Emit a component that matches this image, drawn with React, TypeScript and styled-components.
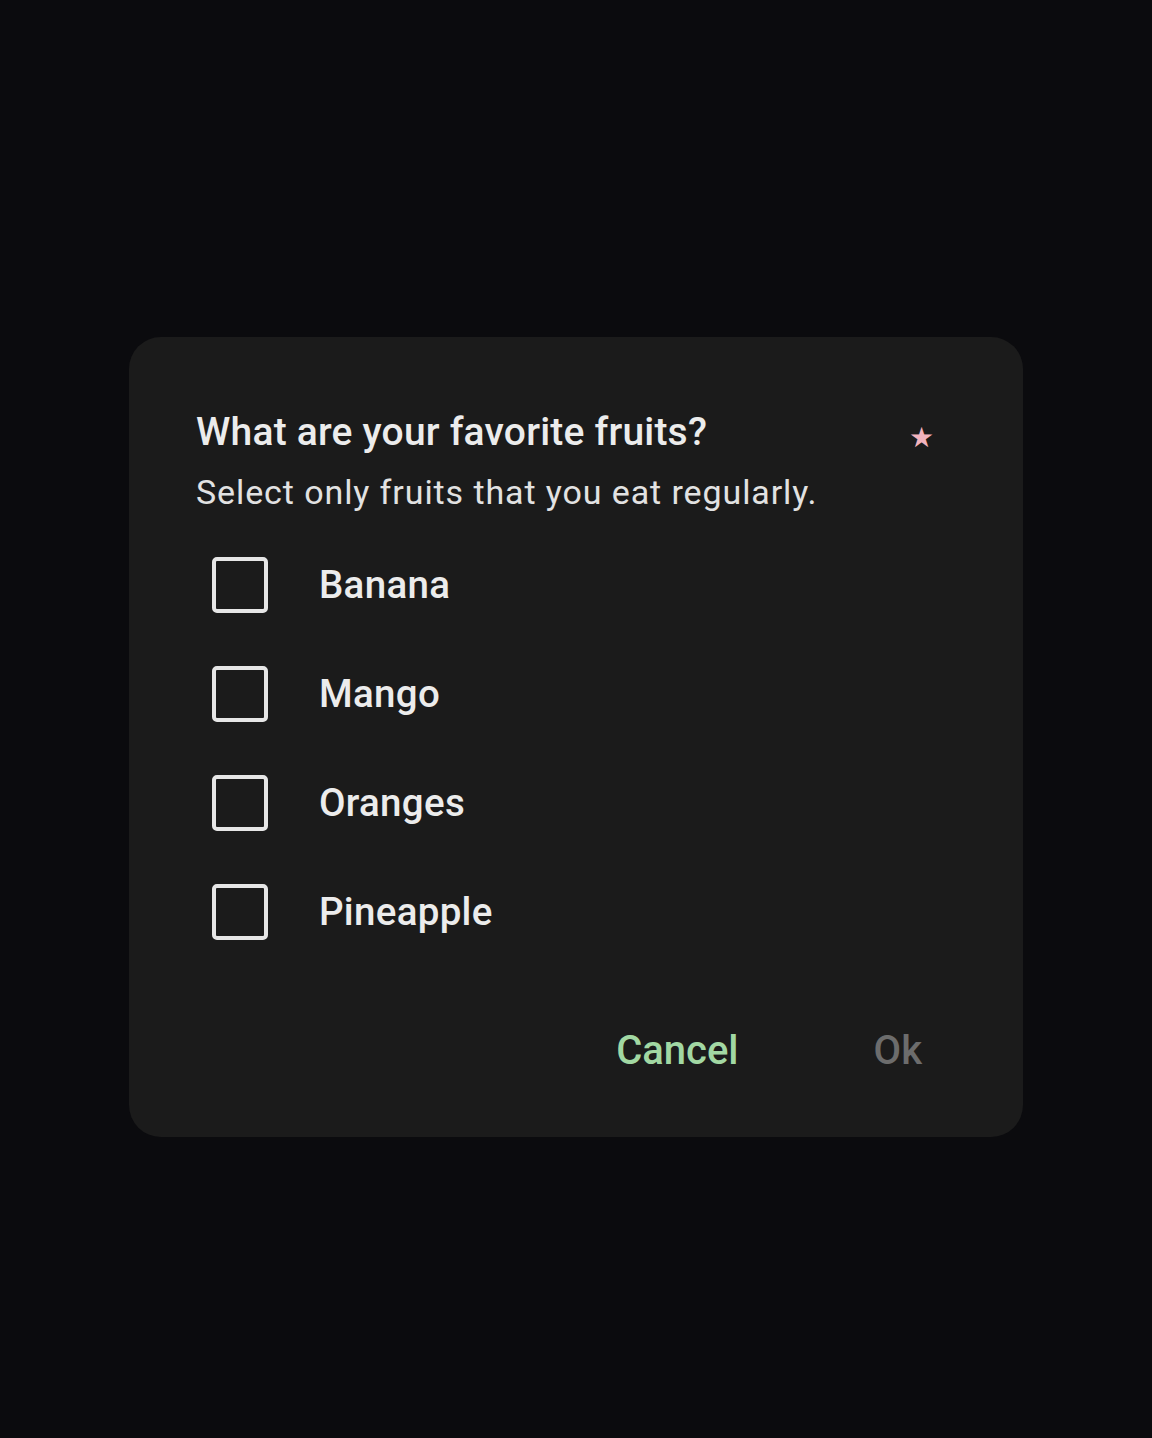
import React from 'react';
import styled, { createGlobalStyle } from 'styled-components';

const GlobalStyle = createGlobalStyle`
  html, body {
    margin: 0;
    padding: 0;
    background: #0b0b0e;
  }
  * {
    box-sizing: border-box;
  }
`;

const Page = styled.div`
  width: 1152px;
  height: 1438px;
  display: flex;
  align-items: flex-start;
  justify-content: center;
  padding-top: 337px;
  background: #0b0b0e;
  font-family: Roboto, 'Noto Sans', sans-serif;
`;

const Dialog = styled.div`
  width: 894px;
  height: 800px;
  background: #1b1b1b;
  border-radius: 32px;
  padding: 70px 67px 0 67px;
  display: flex;
  flex-direction: column;
`;

const TitleRow = styled.div`
  display: flex;
  align-items: center;
  justify-content: space-between;
`;

const Title = styled.h2`
  margin: 0;
  font-size: 39px;
  font-weight: 500;
  color: #ececec;
  line-height: 50px;
  letter-spacing: 0.2px;
`;

const Required = styled.span`
  color: #f2b3bd;
  font-size: 28px;
  margin-right: 22px;
  margin-top: 10px;
`;

const Subtitle = styled.p`
  margin: 13px 0 0 0;
  font-size: 34px;
  font-weight: 400;
  color: #e2e2e2;
  line-height: 44px;
  letter-spacing: 0.9px;
`;

const Options = styled.div`
  display: flex;
  flex-direction: column;
  margin-top: 16px;
`;

const OptionRow = styled.label`
  display: flex;
  align-items: center;
  height: 109px;
  padding-left: 16px;
  cursor: pointer;
`;

const Box = styled.span`
  width: 56px;
  height: 56px;
  border: 4px solid #e6e6e6;
  border-radius: 5px;
  flex-shrink: 0;
`;

const OptionLabel = styled.span`
  margin-left: 51px;
  font-size: 38.5px;
  font-weight: 500;
  color: #ececec;
  letter-spacing: 0.3px;
`;

const Actions = styled.div`
  display: flex;
  justify-content: flex-end;
  align-items: center;
  margin-top: 60px;
  padding-right: 34px;
  gap: 135px;
`;

const ActionButton = styled.button<{ $disabled?: boolean }>`
  background: none;
  border: none;
  padding: 0;
  font-family: Roboto, 'Noto Sans', sans-serif;
  font-size: 40px;
  font-weight: 500;
  line-height: 50px;
  color: ${({ $disabled }) => ($disabled ? '#6c6c6c' : '#a2d8a3')};
  cursor: ${({ $disabled }) => ($disabled ? 'default' : 'pointer')};
`;

const fruits = ['Banana', 'Mango', 'Oranges', 'Pineapple'];

const App: React.FC = () => {
  return (
    <Page>
      <GlobalStyle />
      <Dialog>
        <TitleRow>
          <Title>What are your favorite fruits?</Title>
          <Required>★</Required>
        </TitleRow>
        <Subtitle>Select only fruits that you eat regularly.</Subtitle>
        <Options>
          {fruits.map((fruit) => (
            <OptionRow key={fruit}>
              <Box />
              <OptionLabel>{fruit}</OptionLabel>
            </OptionRow>
          ))}
        </Options>
        <Actions>
          <ActionButton>Cancel</ActionButton>
          <ActionButton $disabled>Ok</ActionButton>
        </Actions>
      </Dialog>
    </Page>
  );
};

export default App;
